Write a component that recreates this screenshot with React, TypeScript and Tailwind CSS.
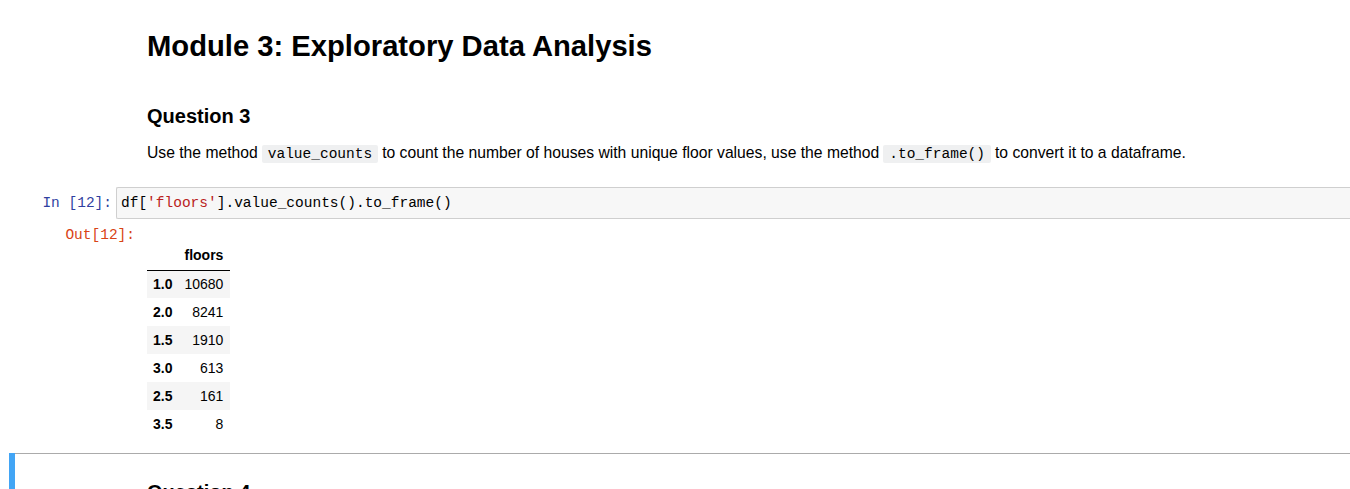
import React from "react";

const rows: [string, string][] = [
  ["1.0", "10680"],
  ["2.0", "8241"],
  ["1.5", "1910"],
  ["3.0", "613"],
  ["2.5", "161"],
  ["3.5", "8"],
];

const mono = "font-['Liberation_Mono',monospace]";

function InlineCode({ children }: { children: React.ReactNode }) {
  return (
    <code
      className={`${mono} text-[14.5px] bg-[#eff0f1] px-[6px] py-[1px] rounded-[2px] mx-[4px]`}
    >
      {children}
    </code>
  );
}

export default function App() {
  return (
    <div className="w-[1350px] h-[489px] overflow-hidden bg-white text-black font-['Liberation_Sans',Arial,sans-serif] text-[14px]">
      {/* Markdown cell */}
      <div className="pl-[147px]">
        <h1 className="text-[29.2px] font-bold leading-[30px] mt-[31px]">
          Module 3: Exploratory Data Analysis
        </h1>
        <h3 className="text-[20px] font-bold leading-[22px] mt-[44px]">
          Question 3
        </h3>
        <p className="text-[15.7px] leading-[20px] mt-[16px] text-[#000]">
          Use the method
          <InlineCode>value_counts</InlineCode>
          to count the number of houses with unique floor values, use the method
          <InlineCode>.to_frame()</InlineCode>
          to convert it to a dataframe.
        </p>
      </div>

      {/* Code cell */}
      <div className="flex mt-[23px]">
        <div
          className={`${mono} w-[116px] pr-[4px] text-right text-[#303f9f] text-[14.5px] leading-[32px]`}
        >
          In&nbsp;[12]:
        </div>
        <div
          className={`flex-1 h-[32px] border border-[#cfcfcf] bg-[#f7f7f7] rounded-l-[2px] border-r-0 pl-[4px] ${mono} text-[14.5px] leading-[30px]`}
        >
          df[<span className="text-[#ba2121]">'floors'</span>].value_counts().to_frame()
        </div>
      </div>

      {/* Output */}
      <div className="flex">
        <div
          className={`${mono} w-[135px] text-right text-[#d84315] text-[14.5px] leading-[17px] pt-[8px]`}
        >
          Out[12]:
        </div>
        <div className="pl-[12px] pt-[22px]">
          <table className="text-[14px] border-collapse">
            <thead>
              <tr className="h-[29px] border-b border-black">
                <th className="px-[6px]"></th>
                <th className="pl-[6px] pr-[7px] text-right font-bold">floors</th>
              </tr>
            </thead>
            <tbody>
              {rows.map(([idx, val], i) => (
                <tr
                  key={idx}
                  className={`h-[28px] ${i % 2 === 0 ? "bg-[#f5f5f5]" : "bg-white"}`}
                >
                  <th className="pl-[6px] pr-[6px] font-bold text-right">{idx}</th>
                  <td className="pl-[6px] pr-[7px] text-right">{val}</td>
                </tr>
              ))}
            </tbody>
          </table>
        </div>
      </div>

      {/* Next (selected) cell */}
      <div className="ml-[9px] mt-[15px] border-l-[6px] border-[#42a5f5] h-[40px]">
        <div className="border-t border-[#ababab] pl-[132px] pt-[27px]">
          <h3 className="text-[20px] font-bold leading-[22px]">Question 4</h3>
        </div>
      </div>
    </div>
  );
}
